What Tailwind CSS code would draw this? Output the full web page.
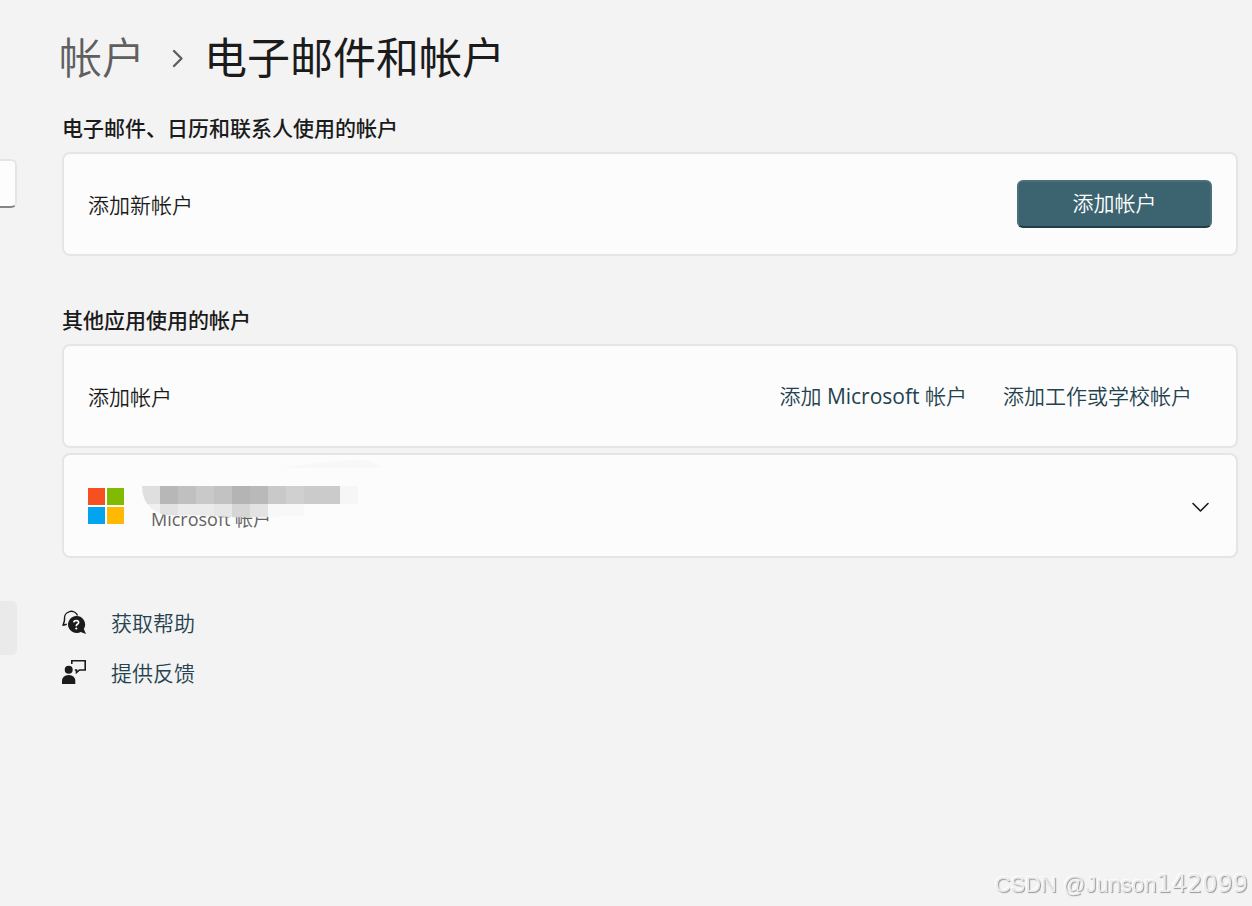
<!DOCTYPE html>
<html lang="zh-CN">

<head>
    <meta charset="UTF-8">
    <meta name="viewport" content="width=device-width, initial-scale=1.0">
    <title>电子邮件和帐户</title>
    <script src="https://cdn.jsdelivr.net/npm/@tailwindcss/browser@4"></script>
</head>

<body class="flex min-h-screen bg-[#f3f3f3] text-[#1b1b1b] font-['Open_Sans','Noto_Sans_CJK_SC',sans-serif]">
    <!-- Sidebar, mostly scrolled out of view -->
    <aside class="w-[17px] shrink-0 overflow-hidden pt-[159px]">
        <input type="search" aria-label="查找设置" class="block h-[49px] w-full rounded-r-md border-2 border-l-0 border-[#e5e5e5] border-b-[#868686] bg-[#fdfdfd]">
        <a href="#" aria-label="帐户" class="mt-[393px] block h-[54px] rounded-r-md bg-[#eaeaea]"></a>
    </aside>

    <main class="min-w-0 flex-1 pt-7 pr-[14px] pl-[45px]">
        <!-- Breadcrumb -->
        <nav class="-ml-[3px] flex h-[60px] items-center text-[43px] font-[350]">
            <a href="#" class="text-[#5f5f5f]">帐户</a>
            <svg class="mr-[17px] ml-[22px] h-5 w-5" viewBox="0 0 20 20" fill="none" stroke="#5f5f5f" stroke-width="2.4" stroke-linecap="round" stroke-linejoin="round">
                <path d="M7 3l7.500 7.500L7 18" />
            </svg>
            <h1 class="font-normal">电子邮件和帐户</h1>
        </nav>

        <!-- Accounts for mail, calendar and contacts -->
        <section class="mt-7">
            <h2 class="text-[21px] leading-6 font-medium">电子邮件、日历和联系人使用的帐户</h2>
            <div class="mt-3 flex h-[104px] items-center justify-between rounded-lg border-2 border-[#e5e5e5] bg-[#fcfcfc] px-6">
                <span class="pt-[3px] text-[21px] font-[350]">添加新帐户</span>
                <button class="h-12 w-[195px] rounded-md border-2 border-[#4a7079] border-b-[#243c45] bg-[#3c6370] text-[21px] font-[350] text-white">添加帐户</button>
            </div>
        </section>

        <!-- Accounts for other apps -->
        <section class="mt-[52px]">
            <h2 class="text-[21px] leading-6 font-medium">其他应用使用的帐户</h2>
            <div class="mt-3 flex h-[104px] items-center justify-between rounded-lg border-2 border-[#e5e5e5] bg-[#fcfcfc] pr-11 pl-6 text-[21px] font-[350]">
                <span class="pt-[3px]">添加帐户</span>
                <div class="flex gap-9 pt-0.5 text-[#24424f]">
                    <a href="#">添加 <span class="font-normal">Microsoft</span> 帐户</a>
                    <a href="#">添加工作或学校帐户</a>
                </div>
            </div>
            <div class="relative mt-[5px] flex h-[105px] items-center rounded-lg border-2 border-[#e5e5e5] bg-[#fcfcfc] px-6">
                <svg class="h-9 w-9" viewBox="0 0 36 36" shape-rendering="crispEdges">
                    <path fill="#f65022" d="M0 0h17v17H0z" />
                    <path fill="#80ba01" d="M19 0h17v17H19z" />
                    <path fill="#02a4ef" d="M0 19h17v17H0z" />
                    <path fill="#ffb902" d="M19 19h17v17H19z" />
                </svg>
                <span class="mt-[26px] ml-[27px] text-lg leading-6 text-[#636363]">Microsoft 帐户</span>
                <!-- Blurred address -->
                <svg class="absolute top-[3px] left-[78px] h-[62px] w-[244px]" viewBox="0 0 244 62">
                    <defs>
                        <clipPath id="smudge">
                            <path d="M0 28H216V46H200Q185 56 160 58L126 59Q90 60 60 57.500L28 57.500Q18 57.500 9 50Q0 42 0 28z" />
                        </clipPath>
                    </defs>
                    <path fill="#f8f8f8" d="M140 10Q180 3 214 2Q234 2 240 10z" />
                    <g clip-path="url(#smudge)" shape-rendering="crispEdges">
                        <path fill="#dfdfdf" d="M0 28h18v18H0z" />
                        <path fill="#b7b7b7" d="M18 28h18v18H18z" />
                        <path fill="#c0c0c0" d="M36 28h18v18H36z" />
                        <path fill="#c9c9c9" d="M54 28h18v18H54z" />
                        <path fill="#c2c2c2" d="M72 28h18v18H72z" />
                        <path fill="#b4b4b4" d="M90 28h18v18H90z" />
                        <path fill="#b9b9b9" d="M108 28h18v18h-18z" />
                        <path fill="#c9c9c9" d="M126 28h18v18h-18z" />
                        <path fill="#d0d0d0" d="M144 28h18v18h-18z" />
                        <path fill="#cbcbcb" d="M162 28h36v18h-36z" />
                        <path fill="#f6f6f6" d="M198 28h18v18h-18z" />
                        <path fill="#f0f0f0" d="M0 46h18v16H0z" />
                        <path fill="#e2e2e2" d="M18 46h18v16H18z" />
                        <path fill="#ebebeb" d="M36 46h36v16H36z" />
                        <path fill="#e6e6e6" d="M72 46h18v16H72z" />
                        <path fill="#d5d5d5" d="M90 46h18v16H90z" />
                        <path fill="#e3e3e3" d="M108 46h18v16h-18z" />
                        <path fill="#f8f8f8" d="M126 46h36v16h-36z" />
                    </g>
                </svg>
                <button aria-label="展开" class="ml-auto">
                    <svg class="h-6 w-6" viewBox="0 0 24 24" fill="none" stroke="#1b1b1b" stroke-width="1.600" stroke-linecap="round" stroke-linejoin="round">
                        <path d="M5 9.500l7.500 7.500L20 9.500" />
                    </svg>
                </button>
            </div>
        </section>

        <!-- Help links -->
        <div class="mt-[39px] text-[21px] font-[350] text-[#24424f]">
            <a href="#" class="flex h-[50px] items-center gap-[25px]">
                <svg class="h-6 w-6" viewBox="0 0 24 24" fill="none">
                    <path stroke="#1b1b1b" stroke-width="1.500" stroke-linejoin="round" d="M15.500 5.500A6.800 6.800 0 0 0 2.500 9L2.400 11L1 15.200L4.800 14.200" />
                    <path fill="#1b1b1b" d="M14.300 6a8.500 8.500 0 1 0 4.400 15.900L24 24l-2.200-5A8.500 8.500 0 0 0 14.300 6z" />
                    <path stroke="#fff" stroke-width="1.700" d="M11.800 12.400Q11.900 10.500 14.300 10.500Q16.700 10.600 16.600 12.500Q16.500 13.700 15.300 14.300Q14.300 14.900 14.300 16.300" />
                    <circle cx="14.300" cy="18.500" r="1.100" fill="#fff" />
                </svg>
                <span class="pt-[3px]">获取帮助</span>
            </a>
            <a href="#" class="flex h-[50px] items-center gap-[25px]">
                <svg class="h-6 w-6" viewBox="0 0 24 24" fill="none">
                    <circle cx="6.700" cy="9.800" r="4" fill="#1b1b1b" />
                    <path fill="#1b1b1b" d="M0 24v-2.500Q0 15 6.700 15T13.300 21.500V24z" />
                    <path stroke="#1b1b1b" stroke-width="1.600" d="M9.800 4V.8H23.200V10H17.500L14.500 12.500V10H12.800" />
                </svg>
                <span class="pt-[3px]">提供反馈</span>
            </a>
        </div>
    </main>

    <!-- Watermark -->
    <div class="fixed right-1 bottom-[3px] font-['Liberation_Sans',sans-serif] text-[22px] leading-9 text-[#ebebeb] [text-shadow:1px_1px_1px_#999,-1px_-1px_1px_#fff]">CSDN @Junson<span class="font-['DejaVu_Sans',sans-serif] text-2xl leading-9">142099</span></div>
</body>

</html>
